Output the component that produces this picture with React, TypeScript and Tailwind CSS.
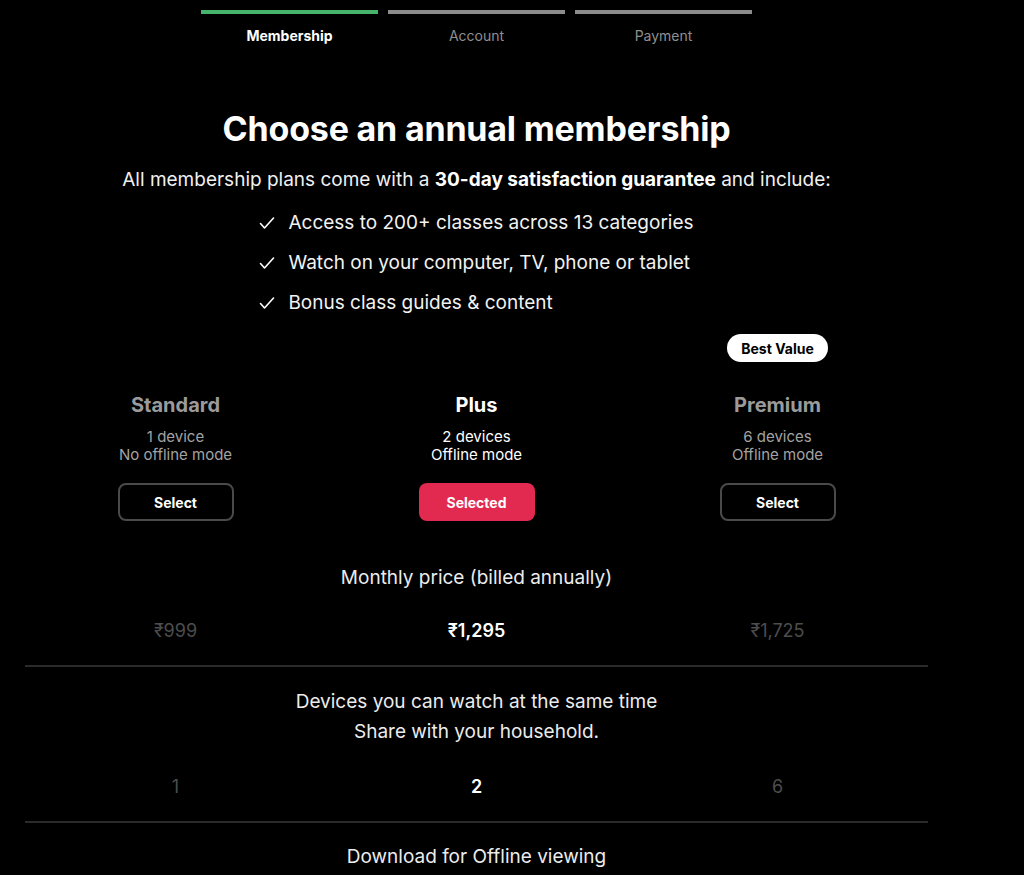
import { Fragment } from 'react';

const steps = [
  { label: 'Membership', active: true },
  { label: 'Account', active: false },
  { label: 'Payment', active: false },
];

const perks = [
  'Access to 200+ classes across 13 categories',
  'Watch on your computer, TV, phone or tablet',
  'Bonus class guides & content',
];

const plans = [
  { name: 'Standard', devices: '1 device', offline: 'No offline mode', price: '₹999', count: '1' },
  { name: 'Plus', devices: '2 devices', offline: 'Offline mode', price: '₹1,295', count: '2', selected: true },
  { name: 'Premium', devices: '6 devices', offline: 'Offline mode', price: '₹1,725', count: '6', best: true },
];

function Check() {
  return (
    <svg width="16" height="16" viewBox="0 0 16 16" fill="none" className="shrink-0">
      <path d="M1.5 8.5l4 4.5L14.5 3" stroke="white" strokeWidth="1.6" strokeLinecap="round" strokeLinejoin="round" />
    </svg>
  );
}

export default function App() {
  return (
    <div className="min-h-screen bg-black text-white" style={{ fontFamily: 'Inter, "Liberation Sans", Arial, sans-serif' }}>
      <div className="w-[903px] ml-[25px]">
        {/* Steps */}
        <div className="flex justify-center gap-[10px] pt-[10px]">
          {steps.map((s) => (
            <div key={s.label} className="w-[177px] flex flex-col items-center">
              <div className={`h-[4px] w-full ${s.active ? 'bg-[#45b36b]' : 'bg-[#8c8c8c]'}`} />
              <p className={`mt-[11px] text-[14px] ${s.active ? 'font-bold text-white' : 'text-[#8f8f8f]'}`}>{s.label}</p>
            </div>
          ))}
        </div>

        {/* Heading */}
        <h1 className="mt-[63px] text-center text-[34px] leading-[40px] font-bold tracking-[-0.2px]">Choose an annual membership</h1>
        <p className="mt-[19px] text-center text-[19px] leading-[24px] text-[#f0f0f0]">
          All membership plans come with a <span className="font-bold text-white">30-day satisfaction guarantee</span> and include:
        </p>

        <div className="flex justify-center mt-[11px]">
          <ul className="flex flex-col">
            {perks.map((p) => (
              <li key={p} className="flex items-center gap-[13px] h-[40px] text-[19px] text-[#f2f2f2]">
                <Check />
                <span>{p}</span>
              </li>
            ))}
          </ul>
        </div>

        {/* Plans */}
        <div className="grid grid-cols-3 mt-[11px]">
          {plans.map((p) => (
            <div key={p.name} className="flex flex-col items-center">
              <div className="h-[28px] mb-[30px]">
                {p.best && (
                  <span className="inline-flex items-center h-[28px] px-[14px] rounded-full bg-white text-black text-[14px] font-bold">
                    Best Value
                  </span>
                )}
              </div>
              <p className={`text-[20px] leading-[26px] font-bold ${p.selected ? 'text-white' : 'text-[#9b9b9b]'}`}>{p.name}</p>
              <p className={`mt-[10px] text-[15px] leading-[18px] ${p.selected ? 'text-white' : 'text-[#a3a3a3]'}`}>{p.devices}</p>
              <p className={`text-[15px] leading-[18px] ${p.selected ? 'text-white' : 'text-[#a3a3a3]'}`}>{p.offline}</p>
              <button
                className={`mt-[19px] w-[116px] h-[38px] rounded-[8px] text-[14px] font-bold text-white ${
                  p.selected ? 'bg-[#e2294f]' : 'border-2 border-[#4a4a4a] bg-black'
                }`}
              >
                {p.selected ? 'Selected' : 'Select'}
              </button>
            </div>
          ))}
        </div>

        {/* Comparison rows */}
        <p className="mt-[45px] text-center text-[19px] leading-[24px] text-[#ececec]">Monthly price (billed annually)</p>
        <div className="grid grid-cols-3 mt-[29px] pb-[22px] border-b-2 border-[#2b2b2b]">
          {plans.map((p) => (
            <p key={p.name} className={`text-center text-[18px] leading-[24px] ${p.selected ? 'text-white font-semibold' : 'text-[#4d4d4d]'}`}>
              {p.price}
            </p>
          ))}
        </div>

        <div className="text-center text-[19px] leading-[30px] text-[#ececec] mt-[20px]">
          <p>Devices you can watch at the same time</p>
          <p>Share with your household.</p>
        </div>
        <div className="grid grid-cols-3 mt-[28px] pb-[22px] border-b-2 border-[#2b2b2b]">
          {plans.map((p) => (
            <Fragment key={p.name}>
              <p className={`text-center text-[18px] leading-[24px] ${p.selected ? 'text-white font-semibold' : 'text-[#4d4d4d]'}`}>{p.count}</p>
            </Fragment>
          ))}
        </div>

        <p className="mt-[22px] text-center text-[19px] leading-[24px] text-[#ececec]">Download for Offline viewing</p>
      </div>
    </div>
  );
}
